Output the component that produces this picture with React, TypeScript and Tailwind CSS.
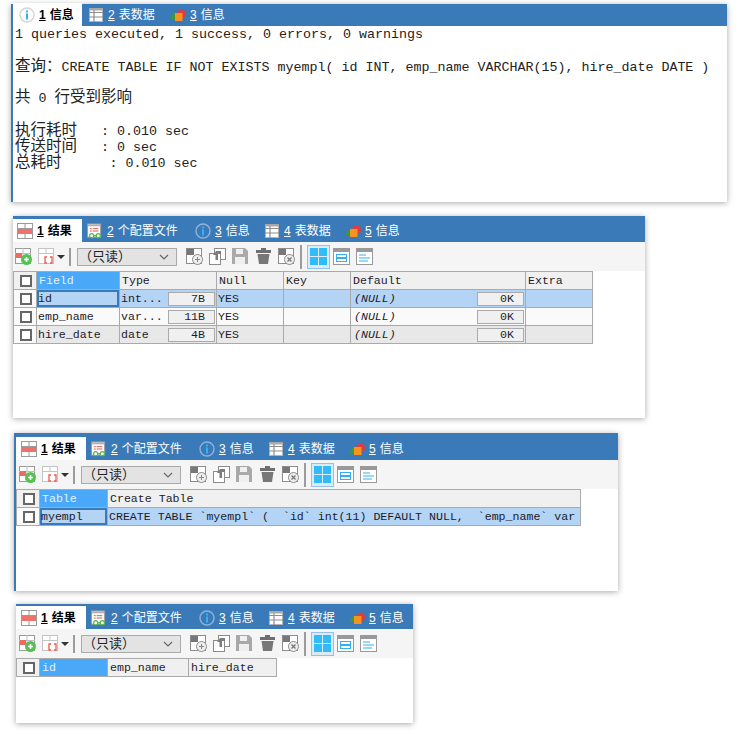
import { ReactNode } from "react";

const mono = "font-['Liberation_Mono','Noto_Sans_CJK_SC',monospace]";
const cjk = "font-['Noto_Sans_CJK_SC',sans-serif]";

function InfoIcon({ active }: { active?: boolean }) {
  return (
    <svg width="16" height="16" viewBox="0 0 16 16">
      <circle cx="8" cy="8" r="7" fill={active ? "#fff" : "#3b7ab8"} stroke={active ? "#d4d4d4" : "#8fb4d8"} strokeWidth="1.4" />
      <rect x="7" y="3.5" width="2" height="2" fill="#35b0f0" />
      <rect x="7" y="6.5" width="2" height="6" fill="#35b0f0" />
    </svg>
  );
}

function TableIcon() {
  return (
    <svg width="14" height="14" viewBox="0 0 14 14">
      <rect x="0.5" y="0.5" width="13" height="13" fill="#fff" stroke="#b5b5b5" />
      <path d="M0 4.5H14M0 9H14M5 1V14" stroke="#8e8e8e" strokeWidth="1.2" />
      <rect x="0" y="0" width="14" height="2.5" fill="#a8a8a8" />
    </svg>
  );
}

function ShapesIcon() {
  return (
    <svg width="16" height="14" viewBox="0 0 16 14">
      <path d="M0 11L4.5 4.5L8 11Z" fill="#3e9a35" />
      <circle cx="11.5" cy="6" r="4.5" fill="#dc3d3d" />
      <rect x="5" y="5" width="7.5" height="8" fill="#f7931e" />
    </svg>
  );
}

function ResultIcon() {
  return (
    <svg width="16" height="16" viewBox="0 0 16 16">
      <rect x="0.5" y="0.5" width="15" height="15" fill="#fff" stroke="#9a9a9a" />
      <path d="M0 5.5H16M8 0V5.5M8 11V16" stroke="#9a9a9a" />
      <rect x="1" y="6" width="14" height="5" fill="#f0706a" />
    </svg>
  );
}

function ConfigIcon() {
  return (
    <svg width="17" height="16" viewBox="0 0 17 16">
      <rect x="0.5" y="0.5" width="14" height="14" fill="#fbfbfb" stroke="#9a9a9a" />
      <rect x="1" y="1" width="13" height="2" fill="#b0b0b0" />
      <path d="M3 5.5H5M6 5.5H12M3 8H5M6 8H12" stroke="#d9534f" />
      <circle cx="5" cy="13" r="2.2" fill="#fff" stroke="#53b848" strokeWidth="1.2" />
      <circle cx="12" cy="13" r="2.2" fill="#fff" stroke="#53b848" strokeWidth="1.2" />
      <path d="M7 13H10" stroke="#53b848" strokeWidth="1.2" />
    </svg>
  );
}

function GridBase({ children }: { children?: ReactNode }) {
  return (
    <svg width="17" height="17" viewBox="0 0 17 17" className="shrink-0">
      <rect x="0.5" y="0.5" width="15" height="15" fill="#fff" stroke="#8c8c8c" />
      <rect x="1" y="1" width="7" height="6" fill="#777" />
      <rect x="8" y="8" width="7" height="7" fill="#777" />
      {children}
    </svg>
  );
}

function Toolbar({ pad }: { pad: string }) {
  return (
    <div className={`h-[29px] shrink-0 bg-[#f5f5f5] flex items-center ${pad}`}>
      <svg width="17" height="17" viewBox="0 0 17 17" className="shrink-0">
        <rect x="0.5" y="0.5" width="15" height="15" fill="#fff" stroke="#9a9a9a" />
        <path d="M0 5.5H16M8 0V16" stroke="#bdbdbd" />
        <rect x="1" y="5" width="6" height="5" fill="#ef6b62" />
        <circle cx="11.5" cy="11.5" r="5.5" fill="#55c152" />
        <path d="M9 11.5H14M11.5 9V14" stroke="#fff" strokeWidth="1.6" />
      </svg>
      <svg width="17" height="17" viewBox="0 0 17 17" className="shrink-0 ml-[6px]">
        <rect x="0.5" y="0.5" width="15" height="15" fill="#fff" stroke="#c4c4c4" />
        <path d="M0 5.5H16M8 0V6" stroke="#c4c4c4" />
        <path d="M9 9H7V15H9M12 9H14V15H12" fill="#fff" stroke="#ee5a4f" strokeWidth="1.3" />
      </svg>
      <svg width="8" height="4" viewBox="0 0 8 4" className="shrink-0 ml-[2px]">
        <path d="M0 0H8L4 4Z" fill="#333" />
      </svg>
      <div className="w-[2px] h-[18px] bg-[#9c9c9c] ml-[4px] shrink-0" />
      <div className={`w-[100px] h-[18px] ml-[6px] shrink-0 bg-[#e3e3e3] border border-[#aaaaaa] flex items-center justify-between pr-[7px] text-[13px] leading-none text-[#222] ${cjk}`}>
        <span className="pl-[1px] -mt-[2px]">（只读）</span>
        <svg width="10" height="6" viewBox="0 0 10 6">
          <path d="M1 1L5 5L9 1" fill="none" stroke="#666" strokeWidth="1.2" />
        </svg>
      </div>
      <div className="ml-[9px]">
        <GridBase>
          <circle cx="11.5" cy="11.5" r="5" fill="#eee" stroke="#8c8c8c" />
          <path d="M9 11.5H14M11.5 9V14" stroke="#888" />
        </GridBase>
      </div>
      <svg width="17" height="17" viewBox="0 0 17 17" className="shrink-0 ml-[6px]">
        <rect x="5.5" y="0.5" width="11" height="11" fill="#fff" stroke="#8c8c8c" />
        <rect x="0.5" y="5.5" width="11" height="11" fill="#fff" stroke="#8c8c8c" />
        <path d="M12 3L7 3L4 7H6.5V12H9V6H12Z" fill="#7d7d7d" />
      </svg>
      <svg width="17" height="17" viewBox="0 0 17 17" className="shrink-0 ml-[6px]">
        <path d="M0 0H13L16 3V16H0Z" fill="#a9a9a9" />
        <rect x="4" y="1" width="7" height="5" fill="#efefef" />
        <rect x="3" y="9" width="10" height="7" fill="#efefef" />
      </svg>
      <svg width="17" height="17" viewBox="0 0 17 17" className="shrink-0 ml-[6px]">
        <path d="M6 0H11V2H16V5H1V2H6Z" fill="#6f6f6f" />
        <path d="M2.5 6H14.5L13 16H4Z" fill="#777" />
      </svg>
      <div className="ml-[6px]">
        <GridBase>
          <circle cx="11.5" cy="11.5" r="5" fill="#eee" stroke="#8c8c8c" />
          <path d="M9.5 9.5L13.5 13.5M13.5 9.5L9.5 13.5" stroke="#777" strokeWidth="1.3" />
        </GridBase>
      </div>
      <div className="w-[2px] h-[24px] bg-[#9c9c9c] ml-[5px] shrink-0" />
      <div className="w-[23px] h-[24px] ml-[5px] shrink-0 bg-[#dcebf9] border border-[#8fc3ee] flex items-center justify-center">
        <svg width="17" height="17" viewBox="0 0 17 17">
          <rect width="8" height="8" fill="#2fbcf8" />
          <rect x="9" width="8" height="8" fill="#2fbcf8" />
          <rect y="9" width="8" height="8" fill="#2fbcf8" />
          <rect x="9" y="9" width="8" height="8" fill="#2fbcf8" />
        </svg>
      </div>
      <svg width="17" height="17" viewBox="0 0 17 17" className="shrink-0 ml-[3px]">
        <rect x="0.5" y="0.5" width="16" height="16" fill="#fff" stroke="#999" />
        <rect x="1" y="1" width="15" height="3" fill="#999" />
        <rect x="3.5" y="6.5" width="10" height="3" fill="none" stroke="#35aef0" />
        <rect x="3.5" y="10.5" width="10" height="3" fill="none" stroke="#35aef0" />
      </svg>
      <svg width="17" height="17" viewBox="0 0 17 17" className="shrink-0 ml-[6px]">
        <rect x="0.5" y="0.5" width="16" height="16" fill="#fff" stroke="#999" />
        <rect x="1" y="1" width="15" height="3" fill="#999" />
        <path d="M3 7H10M3 10H14M3 13H12" stroke="#35aef0" />
      </svg>
    </div>
  );
}

type TabDef = { n: string; label: string; icon: ReactNode; width: string };

function Tabs({ tabs, bar, pad }: { tabs: TabDef[]; bar: string; pad: string }) {
  return (
    <div className={`shrink-0 bg-[#3b7ab8] flex items-end ${bar}`}>
      {tabs.map((t, i) => (
        <div
          key={t.n}
          className={`h-[23px] shrink-0 flex items-center text-[12px] leading-none ${pad} ${t.width} ${
            i === 0 ? "bg-white text-black font-bold" : "text-white"
          } font-['Liberation_Sans','Noto_Sans_CJK_SC',sans-serif]`}
        >
          <span className="w-[16px] shrink-0 flex items-center justify-center">{t.icon}</span>
          <span className="underline ml-[4px] mr-[4px]">{t.n}</span>
          <span className="whitespace-nowrap">{t.label}</span>
        </div>
      ))}
    </div>
  );
}

const wideTabs: TabDef[] = [
  { n: "1", label: "结果", icon: <ResultIcon />, width: "w-[70px]" },
  { n: "2", label: "个配置文件", icon: <ConfigIcon />, width: "w-[108px]" },
  { n: "3", label: "信息", icon: <InfoIcon />, width: "w-[69px]" },
  { n: "4", label: "表数据", icon: <TableIcon />, width: "w-[81px]" },
  { n: "5", label: "信息", icon: <ShapesIcon />, width: "w-[80px]" },
];

const infoTabs: TabDef[] = [
  { n: "1", label: "信息", icon: <InfoIcon active />, width: "w-[69px]" },
  { n: "2", label: "表数据", icon: <TableIcon />, width: "w-[82px]" },
  { n: "3", label: "信息", icon: <ShapesIcon />, width: "w-[80px]" },
];

function Check() {
  return (
    <div className="flex items-center justify-center w-full h-full">
      <div className="w-[12px] h-[12px] bg-white border-2 border-[#666]" />
    </div>
  );
}

function Cell({ children, className = "" }: { children?: ReactNode; className?: string }) {
  return (
    <div className={`h-[18px] border-r border-b border-[#aaaaaa] pl-[1px] overflow-hidden whitespace-pre flex items-center leading-none ${className}`}>
      {children}
    </div>
  );
}

function SizeBox({ children }: { children: ReactNode }) {
  return (
    <div className="ml-auto mr-[1px] w-[47px] h-[14px] shrink-0 bg-[#f0f0f0] border border-[#aaaaaa] flex items-center justify-end pr-[9px]">
      {children}
    </div>
  );
}

const headActive = "bg-[#4aa8f8] text-[#e4f2ff] pl-[2px]";
const head = "bg-[#f0f0f0] pl-[2px]";
const sel = "bg-[#b3d4f5]";
const alt = "bg-[#e8e8e8]";
const plain = "bg-[#fafafa]";
const focus = "bg-[#b3d4f5] shadow-[inset_0_0_0_2px_#3b7ab8]";

function FieldsTable() {
  const rows = [
    { bg: sel, name: "id", type: "int...", size: "7B", first: focus },
    { bg: plain, name: "emp_name", type: "var...", size: "11B", first: plain },
    { bg: alt, name: "hire_date", type: "date", size: "4B", first: alt },
  ];
  return (
    <div className={`w-[580px] grid grid-cols-[23px_83px_97px_67px_67px_175px_67px] border-l border-t border-[#aaaaaa] text-[11.6px] text-[#1c1c2b] ${mono}`}>
      <Cell className="bg-[#f0f0f0]"><Check /></Cell>
      <Cell className={headActive}>Field</Cell>
      <Cell className={head}>Type</Cell>
      <Cell className={head}>Null</Cell>
      <Cell className={head}>Key</Cell>
      <Cell className={head}>Default</Cell>
      <Cell className={head}>Extra</Cell>
      {rows.map((r) => (
        <div key={r.name} className="contents">
          <Cell className={plain}><Check /></Cell>
          <Cell className={r.first}>{r.name}</Cell>
          <Cell className={r.bg}>
            {r.type}
            <SizeBox>{r.size}</SizeBox>
          </Cell>
          <Cell className={r.bg}>YES</Cell>
          <Cell className={r.bg} />
          <Cell className={`${r.bg} pl-[3px]`}>
            <span className="italic">(NULL)</span>
            <SizeBox>0K</SizeBox>
          </Cell>
          <Cell className={r.bg} />
        </div>
      ))}
    </div>
  );
}

function CreateTable() {
  return (
    <div className={`w-[565px] grid grid-cols-[23px_68px_473px] border-l border-t border-[#aaaaaa] text-[11.6px] text-[#1c1c2b] ${mono}`}>
      <Cell className="bg-[#f0f0f0]"><Check /></Cell>
      <Cell className={headActive}>Table</Cell>
      <Cell className={head}>Create Table</Cell>
      <Cell className={plain}><Check /></Cell>
      <Cell className={focus}>myempl</Cell>
      <Cell className={`${sel} pl-0`}>CREATE TABLE `myempl` (  `id` int(11) DEFAULT NULL,  `emp_name` var</Cell>
    </div>
  );
}

function EmptyTable() {
  return (
    <div className={`w-[261px] grid grid-cols-[23px_68px_81px_88px] border-l border-t border-[#aaaaaa] text-[11.6px] text-[#1c1c2b] ${mono}`}>
      <Cell className="bg-[#f0f0f0]"><Check /></Cell>
      <Cell className={headActive}>id</Cell>
      <Cell className={head}>emp_name</Cell>
      <Cell className={head}>hire_date</Cell>
    </div>
  );
}

function Zh({ children }: { children: ReactNode }) {
  return <span className="inline-block h-[16px] leading-[16px] text-[15.5px]">{children}</span>;
}

function InfoPanel() {
  return (
    <section className="ml-[11px] w-[716px] h-[198px] bg-white border-l-2 border-[#3b7ab8] shadow-[0_1px_6px_rgba(0,0,0,0.35)] flex flex-col">
      <Tabs tabs={infoTabs} bar="h-[22px]" pad="pl-[6px]" />
      <div className={`pl-[2px] text-[13.33px] text-[#222] whitespace-pre leading-[16px] ${mono}`}>
        <div className="h-[16px] mt-[1px]">1 queries executed, 1 success, 0 errors, 0 warnings</div>
        <div className="h-[16px] mt-[16px]"><Zh>查询：</Zh>CREATE TABLE IF NOT EXISTS myempl( id INT, emp_name VARCHAR(15), hire_date DATE )</div>
        <div className="h-[16px] mt-[15px]"><Zh>共</Zh> 0 <Zh>行受到影响</Zh></div>
        <div className="h-[16px] mt-[17px]"><Zh>执行耗时</Zh>   : 0.010 sec</div>
        <div className="h-[16px]"><Zh>传送时间</Zh>   : 0 sec</div>
        <div className="h-[16px]"><Zh>总耗时</Zh>      : 0.010 sec</div>
      </div>
    </section>
  );
}

export default function App() {
  return (
    <div className="w-[747px] h-[747px] bg-white pt-[4px] overflow-hidden">
      <InfoPanel />

      <section className="ml-[13px] mt-[14px] w-[632px] h-[202px] bg-white overflow-hidden shadow-[0_1px_6px_rgba(0,0,0,0.35)] flex flex-col">
        <div className="-ml-px">
          <Tabs tabs={wideTabs} bar="h-[26px]" pad="pl-[5px]" />
        </div>
        <Toolbar pad="pl-[2px]" />
        <FieldsTable />
      </section>

      <section className="ml-[14px] mt-[15px] w-[604px] h-[158px] bg-white border-l-2 border-[#3b7ab8] overflow-hidden shadow-[0_1px_6px_rgba(0,0,0,0.35)] flex flex-col">
        <Tabs tabs={wideTabs} bar="h-[27px]" pad="pl-[5px]" />
        <Toolbar pad="pl-[3px]" />
        <CreateTable />
      </section>

      <section className="ml-[16px] mt-[13px] w-[397px] h-[119px] bg-white overflow-hidden shadow-[0_1px_6px_rgba(0,0,0,0.35)] flex flex-col">
        <Tabs tabs={wideTabs} bar="h-[25px]" pad="pl-[5px]" />
        <Toolbar pad="pl-[3px]" />
        <EmptyTable />
      </section>
    </div>
  );
}
